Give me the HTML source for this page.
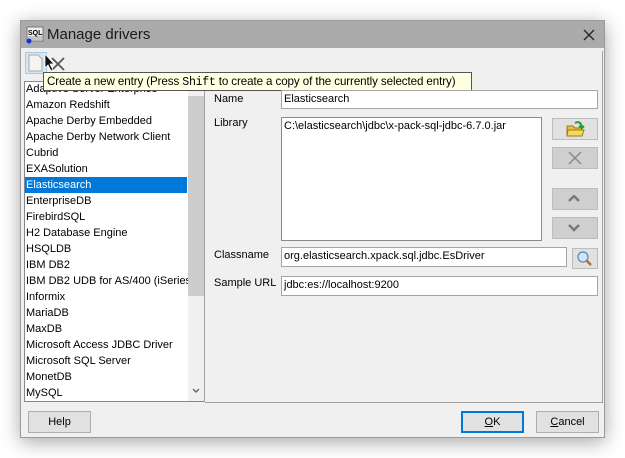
<!DOCTYPE html>
<html><head><style>
*{box-sizing:border-box;margin:0;padding:0}
body{width:625px;height:458px;background:#fff;font-family:"Liberation Sans",sans-serif;font-size:12px;color:#000;position:relative;overflow:hidden}
.win{position:absolute;left:20px;top:20px;width:585px;height:418px;background:#f0f0f0;border:1px solid #9a9a9a;box-shadow:0 4px 18px rgba(0,0,0,.35)}
.title{position:absolute;left:0;top:0;width:583px;height:27px;background:#ababab}
.title span{position:absolute;left:26px;top:5px;font-size:15px;color:#1a1a1a}
.abs{position:absolute}
.list{position:absolute;left:3px;top:60px;width:181px;height:321px;background:#fff;border:1px solid #828790;overflow:hidden}
.it{height:16px;line-height:16px;padding-left:1px;white-space:nowrap;font-size:11px}
.sel{background:#0078d7;color:#fff;width:162px}
.sb{position:absolute;left:163px;top:0;width:16px;height:319px;background:#f0f0f0}
.thumb{position:absolute;left:0;top:14px;width:16px;height:200px;background:#cdcdcd}
.inp{position:absolute;background:#fff;border:1px solid #a5a5a5;font-size:11px;padding:2px 2px;white-space:nowrap}
.lbl{position:absolute;font-size:11px}
.btn{position:absolute;background:#cfcfcf;border:1px solid #bcbcbc}
.pb{position:absolute;background:#e1e1e1;border:1px solid #adadad;text-align:center;line-height:20px;font-size:11px}
</style></head><body>
<div class="win">
<div class="title">
<svg class="abs" style="left:5px;top:5px" width="18" height="18"><rect x="1" y="1" width="16" height="14" fill="#eee" stroke="#777"/><text x="2" y="9" font-size="7" font-family="Liberation Sans" font-weight="bold">SQL</text><line x1="2" y1="11" x2="16" y2="11" stroke="#999"/><line x1="2" y1="13" x2="16" y2="13" stroke="#999"/><circle cx="3" cy="15" r="2.5" fill="#1030d0"/></svg>
<span>Manage drivers</span>
<svg class="abs" style="left:562px;top:8px" width="12" height="12"><path d="M1 1L11 11M11 1L1 11" stroke="#222" stroke-width="1.3"/></svg>
</div>
<div class="abs" style="left:4px;top:31px;width:22px;height:22px;background:#d8e6f2;border:1px solid #a8c8e8"></div>
<svg class="abs" style="left:7px;top:33px" width="16" height="18"><path d="M1 1H10L14 5V17H1Z" fill="#f4f4f4" stroke="#aaa"/></svg>
<svg class="abs" style="left:29px;top:35px" width="16" height="16"><path d="M2 2L14 14M14 2L2 14" stroke="#555" stroke-width="1.8"/></svg>
<div class="list">
<div class="it" style="margin-top:-1px">Adaptive Server Enterprise</div><div class="it">Amazon Redshift</div><div class="it">Apache Derby Embedded</div><div class="it">Apache Derby Network Client</div><div class="it">Cubrid</div><div class="it">EXASolution</div><div class="it sel">Elasticsearch</div><div class="it">EnterpriseDB</div><div class="it">FirebirdSQL</div><div class="it">H2 Database Engine</div><div class="it">HSQLDB</div><div class="it">IBM DB2</div><div class="it">IBM DB2 UDB for AS/400 (iSeries)</div><div class="it">Informix</div><div class="it">MariaDB</div><div class="it">MaxDB</div><div class="it">Microsoft Access JDBC Driver</div><div class="it">Microsoft SQL Server</div><div class="it">MonetDB</div><div class="it">MySQL</div>
<div class="sb"><div class="thumb"></div><svg class="abs" style="left:4px;top:306px" width="8" height="6"><path d="M1 1L4 4L7 1" stroke="#666" stroke-width="1.4" fill="none"/></svg></div>
</div>
<svg class="abs" style="left:23px;top:32px;z-index:3" width="12" height="20"><path d="M1 1V15L4 12L7 18L9 17L6 11H10Z" fill="#111" stroke="#fff" stroke-width="0.8"/></svg>
<div class="abs" style="left:22px;top:51px;width:429px;height:19px;background:#ffffe1;border:1px solid #555;font-size:11.6px;padding:2px 3px;white-space:nowrap;letter-spacing:-0.1px">Create a new entry (Press <span style="font-family:'Liberation Mono',monospace;letter-spacing:-0.3px">Shift</span> to create a copy of the currently selected entry)</div>
<div class="abs" style="left:183px;top:70px;width:1px;height:311px;background:#a0a0a0"></div>
<div class="abs" style="left:184px;top:381px;width:398px;height:1px;background:#a0a0a0"></div>
<div class="abs" style="left:581px;top:30px;width:1px;height:352px;background:#a0a0a0"></div>
<div class="lbl" style="left:193px;top:72px">Name</div>
<div class="inp" style="left:260px;top:69px;width:317px;height:19px">Elasticsearch</div>
<div class="lbl" style="left:193px;top:96px">Library</div>
<div class="inp" style="left:260px;top:96px;width:261px;height:124px;border-color:#8a8a8a">C:\elasticsearch\jdbc\x-pack-sql-jdbc-6.7.0.jar</div>
<div class="btn" style="left:531px;top:97px;width:46px;height:22px;background:#e1e1e1"></div>
<svg class="abs" style="left:545px;top:99px" width="20" height="18"><path d="M1 6H7L9 8H16V16H1Z" fill="#e8c040" stroke="#a07818"/><path d="M2 10H18L16 16H1Z" fill="#f4d860" stroke="#a07818"/><path d="M9 3Q15 0 16 8L18 6M16 8L13 6" stroke="#2a9a2a" stroke-width="2" fill="none"/></svg>
<div class="btn" style="left:531px;top:126px;width:46px;height:22px"></div>
<svg class="abs" style="left:547px;top:130px" width="14" height="14"><path d="M1 1L13 13M13 1L1 13" stroke="#8a8a8a" stroke-width="1.5"/></svg>
<div class="btn" style="left:531px;top:167px;width:46px;height:22px"></div>
<svg class="abs" style="left:547px;top:174px" width="12" height="8"><path d="M1 6L6 1L11 6" stroke="#7a7a7a" stroke-width="2.5" fill="none"/></svg>
<div class="btn" style="left:531px;top:196px;width:46px;height:22px"></div>
<svg class="abs" style="left:547px;top:203px" width="12" height="8"><path d="M1 1L6 6L11 1" stroke="#7a7a7a" stroke-width="2.5" fill="none"/></svg>
<div class="lbl" style="left:193px;top:228px">Classname</div>
<div class="inp" style="left:260px;top:226px;width:286px;height:20px">org.elasticsearch.xpack.sql.jdbc.EsDriver</div>
<div class="btn" style="left:551px;top:227px;width:26px;height:21px;background:#e1e1e1"></div>
<svg class="abs" style="left:555px;top:229px" width="18" height="18"><circle cx="7" cy="7" r="5" fill="#cfe6fa" stroke="#5a8ab8" stroke-width="1.3"/><path d="M10.5 10.5L15 15" stroke="#b07030" stroke-width="2.5"/></svg>
<div class="lbl" style="left:193px;top:256px">Sample URL</div>
<div class="inp" style="left:260px;top:255px;width:317px;height:20px">jdbc:es://localhost:9200</div>
<div class="pb" style="left:7px;top:390px;width:63px;height:22px">Help</div>
<div class="pb" style="left:440px;top:390px;width:63px;height:22px;border:2px solid #0078d7;line-height:18px"><u>O</u>K</div>
<div class="pb" style="left:515px;top:390px;width:63px;height:22px"><u>C</u>ancel</div>
</div>
</body></html>
